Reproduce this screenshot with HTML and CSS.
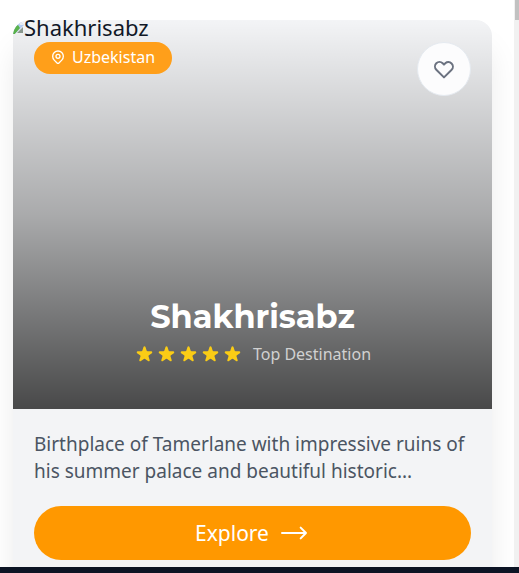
FILE: index.html
```html
<!DOCTYPE html>
<html lang="en">
<head>
<meta charset="utf-8">
<title>Destinations</title>
<link rel="stylesheet" href="styles.css">
</head>
<body>
<div class="viewport">
  <main class="page">
    <article class="card">
      <div class="cover">
        <div class="cover-alt">
          <svg class="broken" viewBox="0 0 11 16" aria-hidden="true">
            <path d="M0 0h5l6 6v9H0z" fill="#b5cdf3"/>
            <path d="M5 0 11 6H7z" fill="#e9edf2"/>
            <path d="M0 8 5 6 7 9 2 15H0z" fill="#5cb54c"/>
            <path d="m2 15 9-9v9z" fill="#f5f6f7"/>
            <path d="m4 14 6-6v6z" fill="#8b9a8f"/>
          </svg>Shakhrisabz
        </div>
        <div class="shade">
          <div class="cover-top">
            <span class="badge">
              <svg class="pin" viewBox="0 0 24 24" aria-hidden="true"><path d="M17.66 16.66 13.41 20.9a2 2 0 0 1-2.82 0l-4.25-4.24a8 8 0 1 1 11.32 0z"/><circle cx="12" cy="11" r="3"/></svg>
              Uzbekistan
            </span>
            <button class="like" type="button" aria-label="Add to favourites">
              <svg viewBox="0 0 24 24" aria-hidden="true"><path d="M4.32 6.32a4.5 4.5 0 0 0 0 6.36L12 20.36l7.68-7.68a4.5 4.5 0 0 0-6.36-6.36L12 7.64l-1.32-1.32a4.5 4.5 0 0 0-6.36 0z"/></svg>
            </button>
          </div>
          <div class="caption">
            <h2 class="title">Shakhrisabz</h2>
            <div class="rating">
              <div class="stars">
                <svg viewBox="0 0 20 20" aria-hidden="true"><path id="star" d="M9.05 2.93c.3-.92 1.6-.92 1.9 0l1.07 3.29a1 1 0 0 0 .95.69h3.46c.97 0 1.37 1.24.59 1.81l-2.8 2.03a1 1 0 0 0-.37 1.12l1.07 3.29c.3.92-.75 1.69-1.54 1.12l-2.8-2.03a1 1 0 0 0-1.17 0l-2.8 2.03c-.78.57-1.84-.2-1.54-1.12l1.07-3.29a1 1 0 0 0-.36-1.12L2.98 8.72c-.78-.57-.38-1.81.59-1.81h3.46a1 1 0 0 0 .95-.69z"/></svg>
                <svg viewBox="0 0 20 20" aria-hidden="true"><use href="#star"/></svg>
                <svg viewBox="0 0 20 20" aria-hidden="true"><use href="#star"/></svg>
                <svg viewBox="0 0 20 20" aria-hidden="true"><use href="#star"/></svg>
                <svg viewBox="0 0 20 20" aria-hidden="true"><use href="#star"/></svg>
              </div>
              <span class="rating-label">Top Destination</span>
            </div>
          </div>
        </div>
      </div>
      <div class="body">
        <p class="description">Birthplace of Tamerlane with impressive ruins of his summer palace and beautiful historic...</p>
        <button class="explore" type="button">
          Explore
          <svg viewBox="0 0 24 24" aria-hidden="true"><path d="m17 8 4 4m0 0-4 4m4-4H3"/></svg>
        </button>
      </div>
    </article>
  </main>
  <div class="scroll-track" aria-hidden="true"><div class="scroll-thumb"></div></div>
</div>
<footer class="footer"></footer>
</body>
</html>
```
FILE: styles.css
```css
* {
  box-sizing: border-box;
}

body {
  margin: 0;
  height: 100vh;
  display: flex;
  flex-direction: column;
  overflow: hidden;
  background: #fff;
  color: #111827;
  font-family: "Noto Sans", "Open Sans", sans-serif;
}

.viewport {
  flex: 1;
  min-height: 0;
  display: flex;
}

.page {
  flex: 1;
  overflow: hidden;
  padding: 20px 22px 0 13px;
}

.card {
  border-radius: 16px;
  overflow: hidden;
  background: #f3f4f6;
  box-shadow: 0 26px 32px -4px rgba(0, 0, 0, 0.1);
}

.cover {
  display: grid;
  height: 389px;
}

.cover-alt,
.shade {
  grid-area: 1 / 1;
}

.cover-alt {
  display: flex;
  height: 13px;
  align-items: center;
  font-size: 22px;
  white-space: nowrap;
}

.broken {
  width: 11px;
  height: 16px;
}

.shade {
  display: flex;
  flex-direction: column;
  justify-content: space-between;
  padding: 22px 21px 42px;
  background: linear-gradient(to top, rgba(0, 0, 0, 0.7), rgba(0, 0, 0, 0.3) 50%, transparent);
}

.cover-top {
  display: flex;
  justify-content: space-between;
  align-items: flex-start;
}

.badge {
  display: flex;
  align-items: center;
  gap: 6px;
  height: 32px;
  padding: 0 17px 2px 16px;
  border-radius: 16px;
  background: #ff9f1a;
  color: #fff;
  font-size: 16px;
}

.pin {
  width: 16px;
  height: 16px;
  fill: none;
  stroke: currentColor;
  stroke-width: 2;
}

.like {
  display: grid;
  place-items: center;
  width: 54px;
  height: 54px;
  padding: 0;
  border: 1px solid #e5eaf0;
  border-radius: 50%;
  background: #fcfcfd;
  color: #6b7280;
}

.like svg {
  width: 24px;
  height: 24px;
  fill: none;
  stroke: currentColor;
  stroke-width: 2;
  stroke-linejoin: round;
}

.caption {
  display: flex;
  flex-direction: column;
  align-items: center;
  gap: 4px;
}

.title {
  margin: 0;
  color: #fff;
  font-family: Montserrat, Inter, sans-serif;
  font-size: 32px;
  font-weight: 700;
  line-height: 40px;
}

.rating {
  display: flex;
  align-items: center;
  gap: 10px;
}

.stars {
  display: flex;
  gap: 1px;
}

.stars svg {
  width: 21px;
  height: 21px;
  fill: #facc15;
}

.rating-label {
  color: #d1d1d1;
  font-size: 16px;
  line-height: 26px;
}

.body {
  padding: 22px 21px 24px;
}

.description {
  margin: 0 0 21px;
  color: #4b5563;
  font-size: 19px;
  line-height: 27px;
}

.explore {
  display: flex;
  align-items: center;
  justify-content: center;
  gap: 9px;
  width: 100%;
  height: 54px;
  padding: 0;
  border: 0;
  border-radius: 27px;
  background: #ff9800;
  color: #fff;
  font-family: inherit;
  font-size: 21px;
}

.explore svg {
  width: 32px;
  height: 32px;
  fill: none;
  stroke: currentColor;
  stroke-width: 1.5;
  stroke-linecap: round;
  stroke-linejoin: round;
}

.scroll-track {
  width: 5px;
  background: #f1f1f1;
}

.scroll-thumb {
  height: 20px;
  margin-left: 1px;
  background: #c1c1c1;
}

.footer {
  height: 6px;
  background: #0c1424;
}
```
